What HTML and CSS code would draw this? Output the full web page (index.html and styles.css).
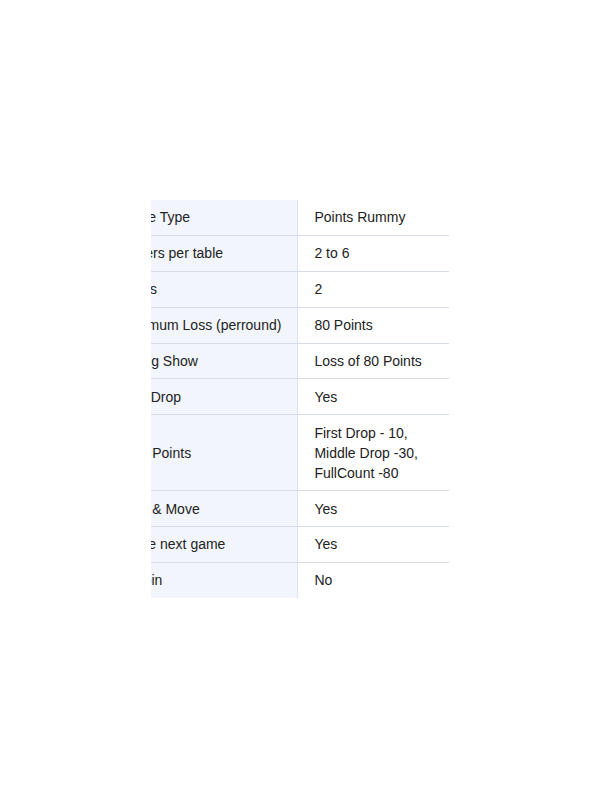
FILE: index.html
```html
<!DOCTYPE html>
<html lang="en">
<head>
<meta charset="utf-8">
<title>Points Rummy</title>
<link rel="stylesheet" href="styles.css">
</head>
<body>
<div class="frame">
  <table class="specs">
    <tbody>
      <tr><th>Game Type</th><td>Points Rummy</td></tr>
      <tr><th>Players per table</th><td>2 to 6</td></tr>
      <tr><th>Decks</th><td>2</td></tr>
      <tr><th>Maximum Loss (perround)</th><td>80 Points</td></tr>
      <tr><th>Wrong Show</th><td>Loss of 80 Points</td></tr>
      <tr><th>Auto Drop</th><td>Yes</td></tr>
      <tr><th>Drop Points</th><td>First Drop - 10,<br>Middle Drop -30,<br>FullCount -80</td></tr>
      <tr><th>Drop &amp; Move</th><td>Yes</td></tr>
      <tr><th>Leave next game</th><td>Yes</td></tr>
      <tr><th>Re-join</th><td>No</td></tr>
    </tbody>
  </table>
</div>
</body>
</html>
```
FILE: styles.css
```css
html, body {
  margin: 0;
  padding: 0;
  background: #ffffff;
}

body {
  font-family: "Liberation Sans", Arial, sans-serif;
  font-size: 14px;
  color: #222222;
}

.frame {
  margin: 200px 0 0 151px;
  width: 298px;
  overflow: hidden;
}

.specs {
  margin-left: -49px;
  border-collapse: collapse;
  border-spacing: 0;
  white-space: nowrap;
}

.specs th,
.specs td {
  padding: 7.45px 16px;
  line-height: 20px;
  text-align: left;
  font-weight: normal;
  vertical-align: middle;
  border-bottom: 1px solid #d5dce7;
}

.specs tr:last-child th,
.specs tr:last-child td {
  border-bottom: none;
}

.specs th {
  width: 163px;
  background: #f2f6fc;
  border-right: 1px solid #dde3ec;
}

.specs td {
  width: 170px;
  background: #ffffff;
}
```
